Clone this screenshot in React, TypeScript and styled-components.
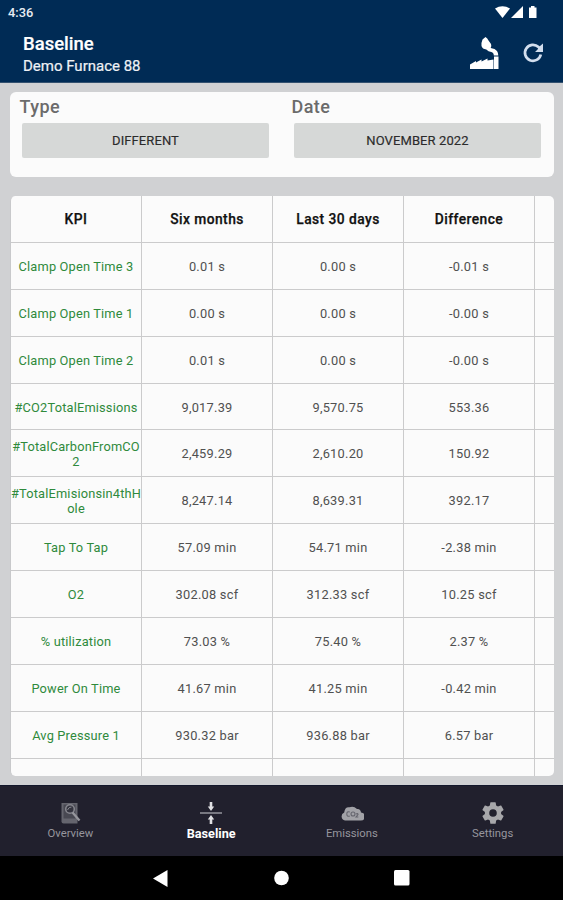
import React from "react";
import styled, { createGlobalStyle } from "styled-components";

const GlobalStyle = createGlobalStyle`
  * { box-sizing: border-box; }
  body { margin: 0; font-family: Roboto, "Liberation Sans", sans-serif; background: #000; }
  button { font: inherit; border: 0; padding: 0; background: none; color: inherit; }
`;

const Screen = styled.div`
  width: 563px;
  height: 900px;
  display: flex;
  flex-direction: column;
  overflow: hidden;
  background: #d0d1d3;
`;

const Header = styled.header`
  height: 83px;
  flex: none;
  background: #002b55;
  color: #fff;
  border-bottom: 1px solid #33516f;
`;

const StatusBar = styled.div`
  height: 25px;
  display: flex;
  align-items: center;
  justify-content: space-between;
  padding: 0 25px 0 8px;
`;

const Clock = styled.span`
  font-size: 12.8px;
  font-weight: 500;
  line-height: 25px;
  color: #e8edf2;
`;

const StatusIcons = styled.div`
  display: flex;
  svg { display: block; }
`;

const AppBar = styled.div`
  height: 57px;
  display: flex;
  justify-content: space-between;
  padding: 0 19px 0 23px;
`;

const Titles = styled.div`
  padding-top: 8px;
`;

const Title = styled.h1`
  margin: 0;
  font-size: 18.5px;
  font-weight: 500;
  line-height: 22px;
  -webkit-text-stroke: 0.2px currentColor;
`;

const Subtitle = styled.div`
  font-size: 15px;
  line-height: 23px;
  color: #eef1f5;
  -webkit-text-stroke: 0.2px currentColor;
`;

const Actions = styled.div`
  display: flex;
  align-items: flex-start;
  gap: 23px;
  padding-top: 12px;
  svg { display: block; }
`;

const RefreshSlot = styled.span`
  padding-top: 5px;
`;

const Filters = styled.section`
  flex: none;
  height: 85px;
  margin: 9px 9px 0 9.5px;
  display: grid;
  grid-template-columns: 272px 1fr;
  background: #fbfbfb;
  border-radius: 6px;
`;

const Field = styled.div`
  padding: 3px 12.5px 0;
`;

const FieldLabel = styled.div`
  margin-left: -2.5px;
  font-size: 18px;
  font-weight: 500;
  line-height: 23px;
  letter-spacing: 0.4px;
  color: #6b6b6b;
`;

const Picker = styled.button`
  display: block;
  width: 247px;
  height: 35px;
  margin-top: 5px;
  background: #d6d8d7;
  border-radius: 2px;
  font-size: 13px;
  line-height: 35px;
  letter-spacing: 0.1px;
  color: #2b2b2b;
  -webkit-text-stroke: 0.15px currentColor;
`;

const TableCard = styled.section`
  flex: none;
  height: 580px;
  margin: 19px 9px 0 10px;
  overflow: hidden;
  background: #fbfbfb;
  border-radius: 5px;
  border-left: 1px solid #c8c9cb;
`;

const Row = styled.div<{ $head?: boolean }>`
  display: grid;
  grid-template-columns: 131px 131px 131px 131px 1fr;
  height: ${(p) => (p.$head ? 46.9 : 46.9)}px;
  border-bottom: 1px solid #cbcbcc;
  font-size: ${(p) => (p.$head ? 13.8 : 12.8)}px;
  font-weight: ${(p) => (p.$head ? 500 : 400)};
  color: ${(p) => (p.$head ? "#111" : "#505050")};
  letter-spacing: ${(p) => (p.$head ? 0.45 : 0.25)}px;
  -webkit-text-stroke: ${(p) => (p.$head ? 0.25 : 0)}px currentColor;
`;

const Cell = styled.div<{ $name?: boolean }>`
  display: flex;
  align-items: center;
  justify-content: center;
  padding-top: 1px;
  text-align: center;
  line-height: 15px;
  white-space: pre;
  border-right: 1px solid #cbcbcc;
  color: ${(p) => (p.$name ? "#2f8a3b" : "inherit")};
  letter-spacing: ${(p) => (p.$name ? "0.18px" : "inherit")};
  &:last-child { border-right: 0; }
`;

const Tabs = styled.nav`
  flex: none;
  height: 71px;
  margin-top: 9px;
  display: grid;
  grid-template-columns: repeat(4, 1fr);
  background: #21202d;
  border-top: 1px solid #13172b;
`;

const Tab = styled.button<{ $active?: boolean }>`
  display: flex;
  flex-direction: column;
  align-items: center;
  padding-top: 14px;
  font-size: ${(p) => (p.$active ? 12.7 : 11.3)}px;
  font-weight: ${(p) => (p.$active ? 700 : 400)};
  line-height: 16px;
  color: ${(p) => (p.$active ? "#fff" : "#96969d")};
  svg { display: block; }
`;

const IconSlot = styled.span`
  height: 26px;
  display: flex;
  align-items: center;
  justify-content: center;
`;

const SystemNav = styled.div`
  flex: none;
  height: 44px;
  display: flex;
  justify-content: center;
  align-items: center;
  gap: 105px;
  background: #000;
  svg { display: block; }
`;

const rows: string[][] = [
  ["Clamp Open Time 3", "0.01 s", "0.00 s", "-0.01 s"],
  ["Clamp Open Time 1", "0.00 s", "0.00 s", "-0.00 s"],
  ["Clamp Open Time 2", "0.01 s", "0.00 s", "-0.00 s"],
  ["#CO2TotalEmissions", "9,017.39", "9,570.75", "553.36"],
  ["#TotalCarbonFromCO\n2", "2,459.29", "2,610.20", "150.92"],
  ["#TotalEmisionsin4thH\nole", "8,247.14", "8,639.31", "392.17"],
  ["Tap To Tap", "57.09 min", "54.71 min", "-2.38 min"],
  ["O2", "302.08 scf", "312.33 scf", "10.25 scf"],
  ["% utilization", "73.03 %", "75.40 %", "2.37 %"],
  ["Power On Time", "41.67 min", "41.25 min", "-0.42 min"],
  ["Avg Pressure 1", "930.32 bar", "936.88 bar", "6.57 bar"],
  ["", "", "", ""],
];

const FactoryIcon = () => (
  <svg width="30" height="33" viewBox="0 0 30 33" fill="#fff">
    <path d="M1 27.500l6-3.500v1.500l5.500-3v2l6-3v2l6-1V32H1z" />
    <path d="M25 19.500h4.500V32H25z" />
    <path d="M13.500 2.500L16.500 0q2 1 3 3.500l2.500 3.500q.8 2-.3 4 4.500.5 6.300 3 1.300 2 1.300 4.500h-4.500q0-3-2.500-3.500-3-.3-5-2.500-4-.5-4.800-3.500Q12 6 13.500 2.500z" />
  </svg>
);

const RefreshIcon = () => (
  <svg width="22" height="22" viewBox="0 0 22 22">
    <path d="M18.800 12.500A8 8 0 1 1 16.500 5L18 7" fill="none" stroke="#d2deee" strokeWidth="2.700" />
    <path d="M21 1.500V10h-8l3-3 2-3z" fill="#d2deee" />
  </svg>
);

const OverviewIcon = () => (
  <svg width="22" height="24" viewBox="0 0 22 24">
    <path d="M2.500 2h16v20.500h-14q-2 0-2-2z" fill="#65656e" />
    <path d="M4.500 3.500h12v14h-12z" fill="#484852" />
    <circle cx="11" cy="8" r="4.300" fill="#34343f" stroke="#85858d" strokeWidth="1.600" />
    <path d="M8.500 9q1-3 4-3" fill="none" stroke="#85858d" />
    <path d="M13.500 11.500l7 8" stroke="#96969d" strokeWidth="2.300" />
  </svg>
);

const BaselineIcon = () => (
  <svg width="22" height="24" viewBox="0 0 22 24">
    <path d="M0 12h22" stroke="#777780" strokeWidth="2" />
    <path d="M9.700 1h2.600v4.500h1.900L11 10 7.800 5.500h1.900zM11 14l3.200 4.500h-1.900V23H9.700v-4.500H7.800z" fill="#e0e0e3" />
  </svg>
);

const CloudIcon = () => (
  <svg width="24" height="24" viewBox="0 0 24 24">
    <path d="M5 19.500a4.200 4.200 0 0 1-.8-8Q5 5.500 9.500 6.300q4-1.800 7.500 1.700 3.500-.5 4 3.500a4 4 0 0 1-.5 8z" fill="#a2a2a7" />
    <g fill="none" stroke="#65656e" strokeWidth="1.100">
      <path d="M9.800 11q-3-1-3 2t3 2" />
      <circle cx="13" cy="13" r="2" />
      <path d="M16 13q2-1 2 .5L16 16h2.300" />
    </g>
  </svg>
);

const GearIcon = () => (
  <svg width="26" height="26" viewBox="0 0 24 24" fill="#a7a7aa">
    <path d="M19.430 12.980c.04-.32.07-.64.07-.98s-.03-.66-.07-.98l2.110-1.650c.19-.15.24-.42.12-.64l-2-3.460c-.12-.22-.39-.3-.61-.22l-2.490 1c-.52-.4-1.080-.73-1.690-.98l-.38-2.650C14.460 2.180 14.250 2 14 2h-4c-.25 0-.46.18-.49.42l-.38 2.650c-.61.25-1.170.59-1.690.98l-2.490-1c-.23-.09-.49 0-.61.22l-2 3.460c-.13.22-.07.49.12.64l2.110 1.650c-.04.32-.07.65-.07.98s.03.66.07.98l-2.110 1.650c-.19.15-.24.42-.12.64l2 3.460c.12.22.39.3.61.22l2.490-1c.52.4 1.080.73 1.690.98l.38 2.650c.03.24.24.42.49.42h4c.25 0 .46-.18.49-.42l.38-2.650c.61-.25 1.170-.59 1.690-.98l2.490 1c.23.09.49 0 .61-.22l2-3.460c.12-.22.07-.49-.12-.64l-2.110-1.650zM12 15.500a3.500 3.500 0 1 1 0-7 3.500 3.500 0 0 1 0 7z" />
  </svg>
);

const tabs = [
  { label: "Overview", icon: <OverviewIcon /> },
  { label: "Baseline", icon: <BaselineIcon />, active: true },
  { label: "Emissions", icon: <CloudIcon /> },
  { label: "Settings", icon: <GearIcon /> },
];

export default function App() {
  return (
    <Screen>
      <GlobalStyle />
      <Header>
        <StatusBar>
          <Clock>4:36</Clock>
          <StatusIcons>
            <svg width="43" height="13" viewBox="0 0 43 13" fill="#fff">
              <path d="M0 2.500Q7.500-2 15 2.500L7.500 12z" />
              <path d="M28 0v12H16z" />
              <path d="M34 1.500h2V0h3.500v1.500h2V12H34z" />
            </svg>
          </StatusIcons>
        </StatusBar>
        <AppBar>
          <Titles>
            <Title>Baseline</Title>
            <Subtitle>Demo Furnace 88</Subtitle>
          </Titles>
          <Actions>
            <FactoryIcon />
            <RefreshSlot>
              <RefreshIcon />
            </RefreshSlot>
          </Actions>
        </AppBar>
      </Header>
      <Filters>
        <Field>
          <FieldLabel>Type</FieldLabel>
          <Picker>DIFFERENT</Picker>
        </Field>
        <Field>
          <FieldLabel>Date</FieldLabel>
          <Picker>NOVEMBER 2022</Picker>
        </Field>
      </Filters>
      <TableCard>
        <Row $head>
          {["KPI", "Six months", "Last 30 days", "Difference", ""].map((h, i) => (
            <Cell key={i}>{h}</Cell>
          ))}
        </Row>
        {rows.map((row, r) => (
          <Row key={r}>
            {[...row, ""].map((value, c) => (
              <Cell key={c} $name={c === 0}>{value}</Cell>
            ))}
          </Row>
        ))}
      </TableCard>
      <Tabs>
        {tabs.map((tab) => (
          <Tab key={tab.label} $active={tab.active}>
            <IconSlot>{tab.icon}</IconSlot>
            {tab.label}
          </Tab>
        ))}
      </Tabs>
      <SystemNav>
        <svg width="15" height="17" viewBox="0 0 15 17"><path d="M0 8.500L14.500 0v17z" fill="#fff" /></svg>
        <svg width="16" height="16" viewBox="0 0 16 16"><circle cx="8.500" cy="8" r="7.300" fill="#fff" /></svg>
        <svg width="16" height="16" viewBox="0 0 16 16"><rect width="15.500" height="15.500" rx="1.500" fill="#fff" /></svg>
      </SystemNav>
    </Screen>
  );
}
